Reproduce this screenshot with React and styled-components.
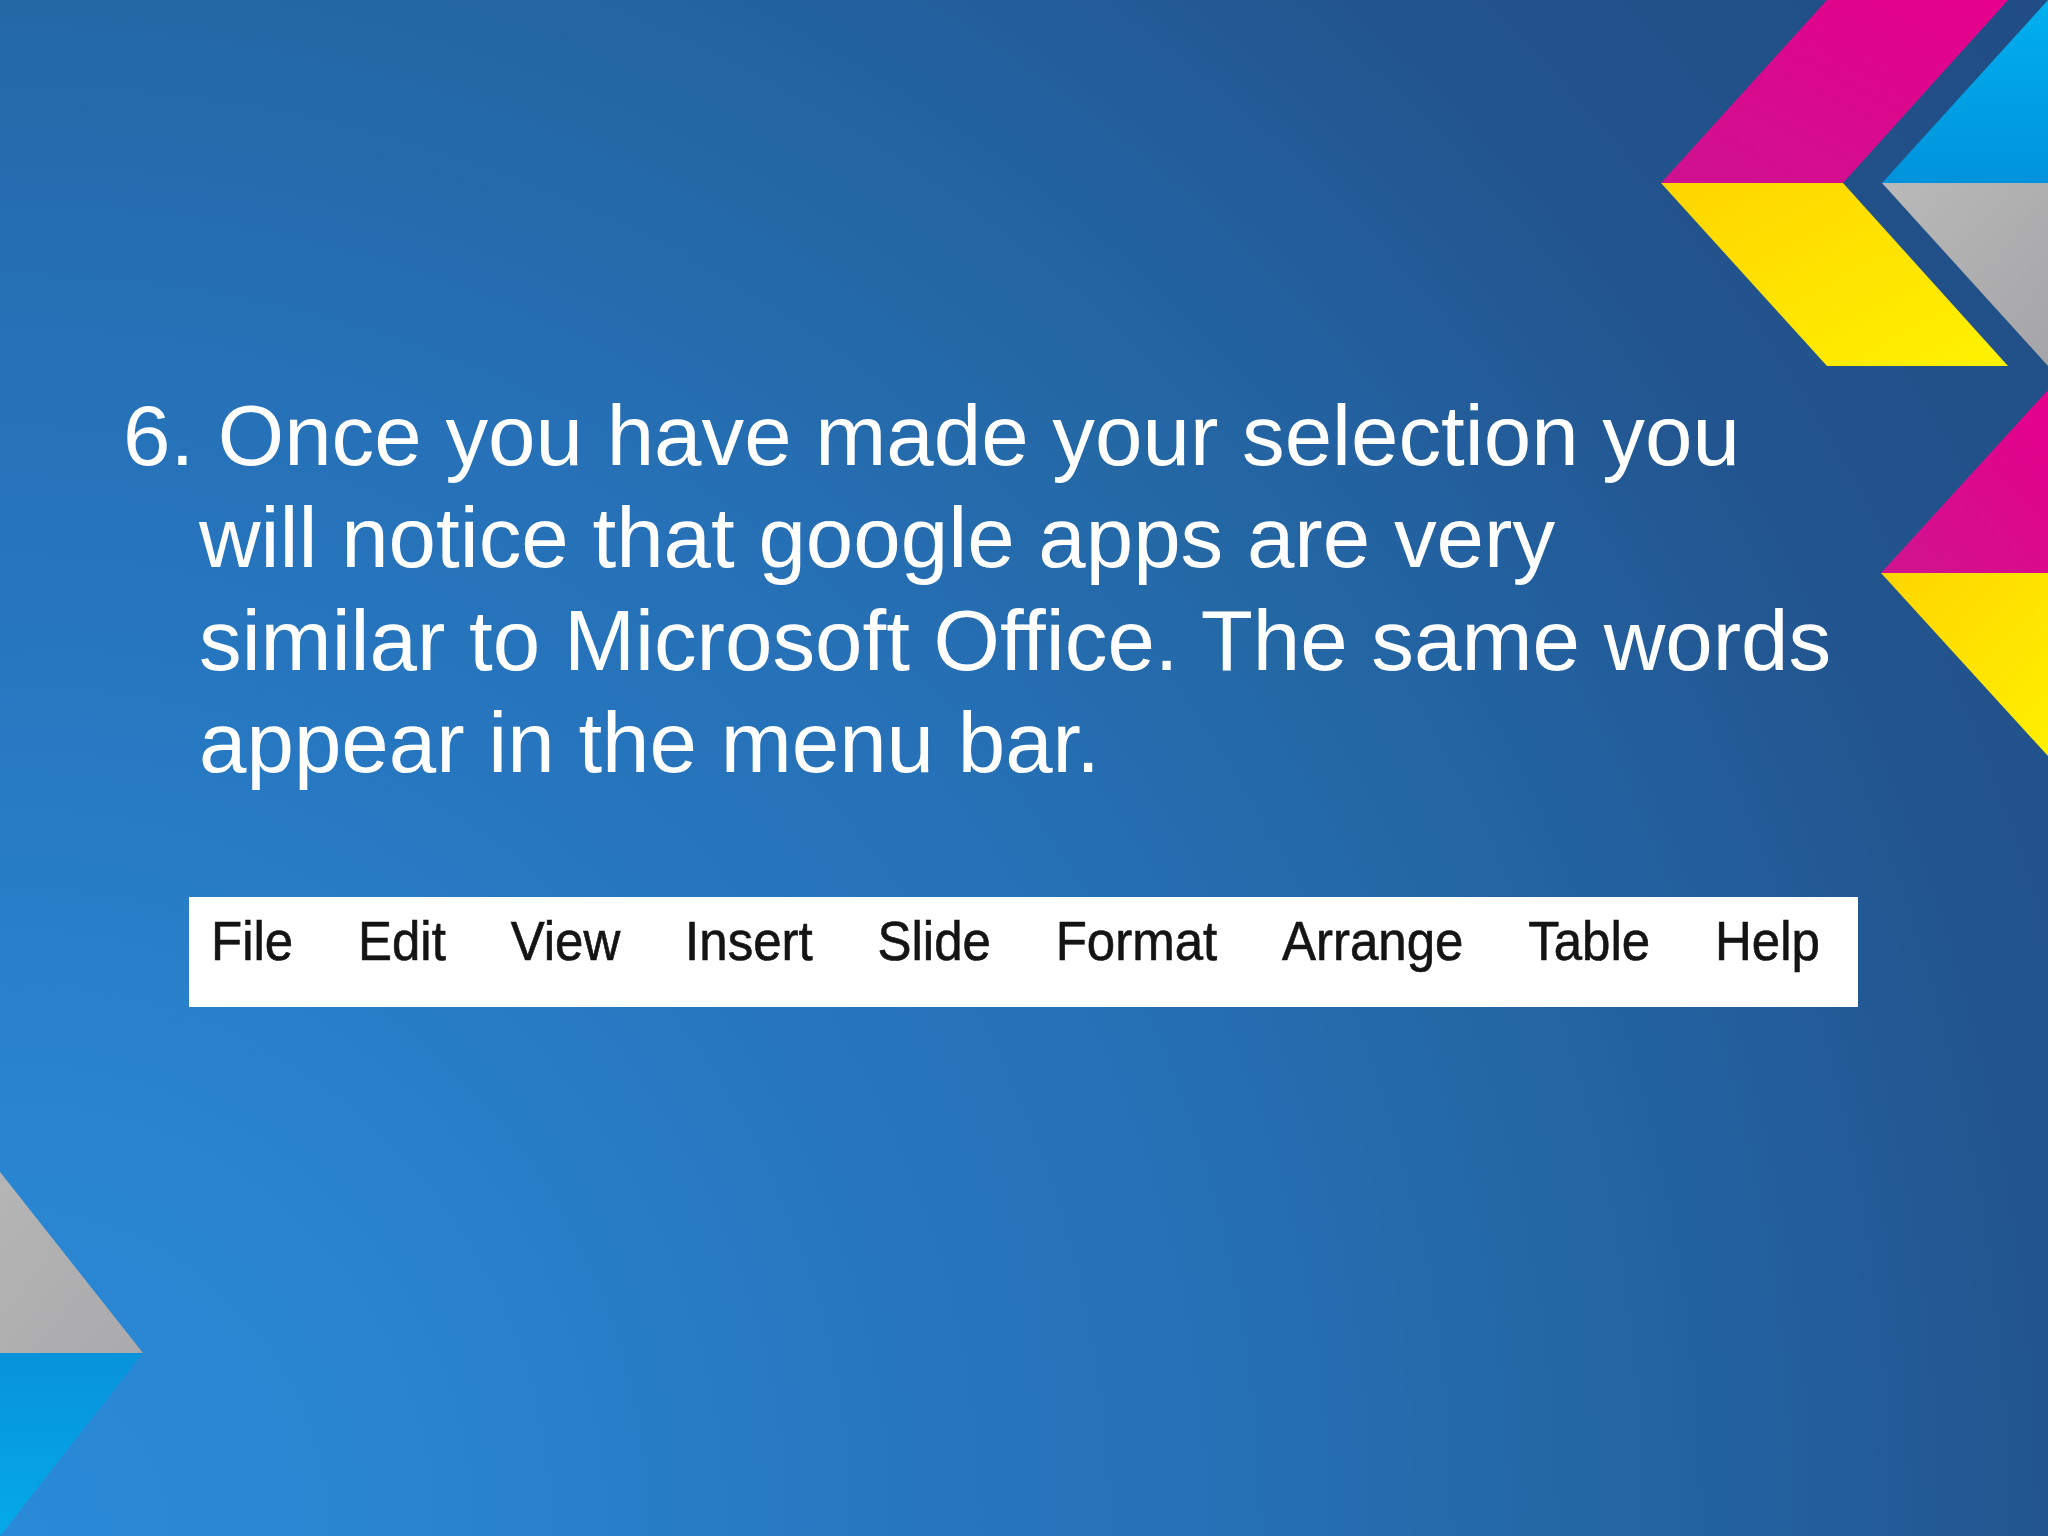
import React from "react";
import styled, { createGlobalStyle } from "styled-components";

const Global = createGlobalStyle`
  html, body { margin: 0; padding: 0; }
  body { width: 2048px; height: 1536px; overflow: hidden; }
`;

const Slide = styled.div`
  position: relative;
  width: 2048px;
  height: 1536px;
  overflow: hidden;
  background: radial-gradient(
    circle at 0% 100%,
    #2a8ad8 0px,
    #2a84cf 420px,
    #2676bf 900px,
    #2670b6 1240px,
    #2468a6 1536px,
    #2361a0 1750px,
    #22558f 2048px,
    #22528b 2200px,
    #214c85 2560px
  );
  font-family: "Liberation Sans", Arial, sans-serif;
  display: flex;
  flex-direction: column;
  padding-top: 385px;
  box-sizing: border-box;
`;

const Body = styled.p`
  margin: 0 0 0 199px;
  width: 1680px;
  color: #ffffff;
  font-size: 85.3px;
  line-height: 102.4px;
  text-indent: -76px;
  position: relative;
  z-index: 1;
`;

const MenuBar = styled.nav`
  margin: 102px 0 0 189px;
  width: 1669px;
  height: 110px;
  box-sizing: border-box;
  background: #ffffff;
  display: flex;
  align-items: flex-start;
  gap: 64.8px;
  padding: 20px 0 0 22px;
  position: relative;
  z-index: 1;
`;

const MenuItem = styled.span`
  font-family: "Liberation Sans", Arial, sans-serif;
  font-size: 51px;
  line-height: 51px;
  color: #141414;
  -webkit-text-stroke: 0.6px #141414;
  display: inline-block;
  transform: scaleY(1.07);
  transform-origin: 50% 85%;
`;

const Corner = styled.svg`
  position: absolute;
  display: block;
  ${(p) => p.$top !== undefined && `top: ${p.$top}px;`}
  ${(p) => p.$bottom !== undefined && `bottom: ${p.$bottom}px;`}
  ${(p) => p.$left !== undefined && `left: ${p.$left}px;`}
  ${(p) => p.$right !== undefined && `right: ${p.$right}px;`}
`;

function TopRightShapes() {
  return (
    <Corner $top={0} $right={0} width="400" height="760" viewBox="0 0 400 760">
      <defs>
        <linearGradient id="mag1" x1="1" y1="0" x2="0" y2="1">
          <stop offset="0" stopColor="#e6008b" />
          <stop offset="1" stopColor="#ce128f" />
        </linearGradient>
        <linearGradient id="yel1" x1="0" y1="0" x2="1" y2="1">
          <stop offset="0" stopColor="#ffd500" />
          <stop offset="1" stopColor="#fff200" />
        </linearGradient>
        <linearGradient id="cy1" x1="0" y1="0" x2="0" y2="1">
          <stop offset="0" stopColor="#00b0ee" />
          <stop offset="1" stopColor="#0093dc" />
        </linearGradient>
        <linearGradient id="gr1" x1="0" y1="0" x2="1" y2="1">
          <stop offset="0" stopColor="#b9b9ba" />
          <stop offset="1" stopColor="#a5a5a7" />
        </linearGradient>
        <linearGradient id="mag2" x1="1" y1="0" x2="0" y2="1">
          <stop offset="0" stopColor="#e6008b" />
          <stop offset="1" stopColor="#cf148f" />
        </linearGradient>
        <linearGradient id="yel2" x1="0" y1="0" x2="1" y2="1">
          <stop offset="0" stopColor="#ffd500" />
          <stop offset="1" stopColor="#fff000" />
        </linearGradient>
      </defs>
      <polygon points="179,0 360,0 195,183 13,183" fill="url(#mag1)" />
      <polygon points="13,183 195,183 360,366 179,366" fill="url(#yel1)" />
      <polygon points="234,183 400,0 400,183" fill="url(#cy1)" />
      <polygon points="234,183 400,183 400,366" fill="url(#gr1)" />
      <polygon points="233,573 400,390 400,573" fill="url(#mag2)" />
      <polygon points="233,573 400,573 400,756" fill="url(#yel2)" />
    </Corner>
  );
}

function BottomLeftShapes() {
  return (
    <Corner $bottom={0} $left={0} width="150" height="370" viewBox="0 0 150 370">
      <defs>
        <linearGradient id="gr2" x1="0" y1="0" x2="1" y2="1">
          <stop offset="0" stopColor="#b5b5b6" />
          <stop offset="1" stopColor="#aaaaac" />
        </linearGradient>
        <linearGradient id="cy2" x1="0" y1="0" x2="0" y2="1">
          <stop offset="0" stopColor="#0892dc" />
          <stop offset="1" stopColor="#04aaea" />
        </linearGradient>
      </defs>
      <polygon points="0,6 143,187 0,187" fill="url(#gr2)" />
      <polygon points="0,187 143,187 0,370" fill="url(#cy2)" />
    </Corner>
  );
}

const lines = [
  "6. Once you have made your selection you",
  "will notice that google apps are very",
  "similar to Microsoft Office. The same words",
  "appear in the menu bar.",
];

const items = ["File", "Edit", "View", "Insert", "Slide", "Format", "Arrange", "Table", "Help"];

export default function App() {
  return (
    <>
      <Global />
      <Slide>
        <TopRightShapes />
        <BottomLeftShapes />
        <Body>
          {lines.map((l, i) => (
            <React.Fragment key={i}>
              {l}
              {i < lines.length - 1 && <br />}
            </React.Fragment>
          ))}
        </Body>
        <MenuBar>
          {items.map((it) => (
            <MenuItem key={it}>{it}</MenuItem>
          ))}
        </MenuBar>
      </Slide>
    </>
  );
}
